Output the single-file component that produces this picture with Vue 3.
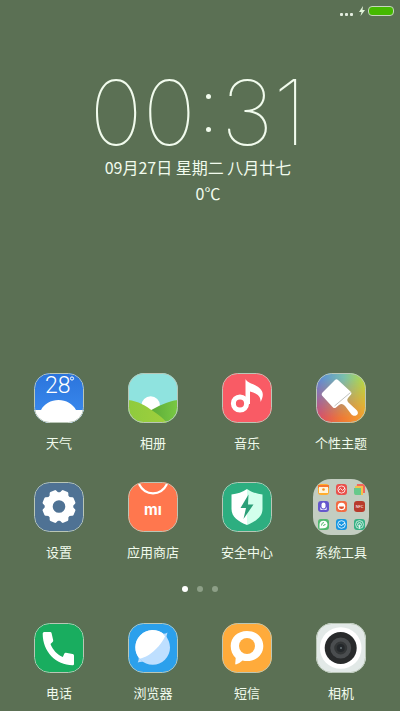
<script setup>
import { ref } from 'vue'

const apps = ref([
  { icon: 'weather', name: '天气' },
  { icon: 'gallery', name: '相册' },
  { icon: 'music', name: '音乐' },
  { icon: 'themes', name: '个性主题' },
  { icon: 'settings', name: '设置' },
  { icon: 'store', name: '应用商店' },
  { icon: 'security', name: '安全中心' },
  { icon: 'tools', name: '系统工具', folder: true },
])

const dock = ref([
  { icon: 'phone', name: '电话' },
  { icon: 'browser', name: '浏览器' },
  { icon: 'message', name: '短信' },
  { icon: 'camera', name: '相机' },
])

const currentPage = ref(0)
const teeth = [22.5, 67.5, 112.5, 157.5, 202.5, 247.5, 292.5, 337.5]
</script>

<template>
  <div class="home">
    <svg class="defs" aria-hidden="true">
      <defs>
        <linearGradient id="sky" x1="0" y1="0" x2="0" y2="1">
          <stop offset="0" stop-color="#2b74dc" />
          <stop offset="1" stop-color="#3c8df0" />
        </linearGradient>
        <linearGradient id="hill" x1="0" y1="0" x2="1" y2="0">
          <stop offset="0" stop-color="#8ecb3e" />
          <stop offset="1" stop-color="#a0cf3c" />
        </linearGradient>
        <linearGradient id="hill-back" x1="0" y1="0" x2="1" y2="0">
          <stop offset="0" stop-color="#58a838" />
          <stop offset="1" stop-color="#7ac943" />
        </linearGradient>
        <linearGradient id="rainbow-top" x1="0" y1="0" x2="1" y2="0">
          <stop offset="0" stop-color="#5a86dc" />
          <stop offset="0.55" stop-color="#79bfae" />
          <stop offset="1" stop-color="#b9dc3c" />
        </linearGradient>
        <linearGradient id="rainbow-bottom" x1="0" y1="0" x2="1" y2="0">
          <stop offset="0" stop-color="#d8486c" />
          <stop offset="0.5" stop-color="#ee7836" />
          <stop offset="1" stop-color="#f6a22c" />
        </linearGradient>
        <linearGradient id="fade" x1="0" y1="0" x2="0" y2="1">
          <stop offset="0.1" stop-color="#000" />
          <stop offset="0.9" stop-color="#fff" />
        </linearGradient>
        <mask id="fade-mask">
          <rect width="50" height="50" fill="url(#fade)" />
        </mask>

        <symbol id="weather" viewBox="0 0 50 50">
          <rect width="50" height="50" fill="url(#sky)" />
          <path d="M0 37h7c3-6 10-10 17.500-10S39 31 42 37h8v13H0z" fill="#fff" />
          <text class="degrees" x="11" y="20">28</text>
          <circle cx="38" cy="5.500" r="1.600" fill="none" stroke="#fff" />
        </symbol>

        <symbol id="gallery" viewBox="0 0 50 50">
          <rect width="50" height="50" fill="#8fe3df" />
          <circle cx="22.700" cy="32.500" r="9.300" fill="#fff" />
          <path d="M20 39C30 33 40 28 50 27v23H20z" fill="url(#hill-back)" />
          <path d="M0 27c10 1 18 6 25 11 6 4 11 8 14 12H0z" fill="url(#hill)" />
        </symbol>

        <symbol id="music" viewBox="0 0 50 50">
          <rect width="50" height="50" fill="#f95b65" />
          <circle cx="18" cy="30.500" r="6.600" fill="none" stroke="#fff" stroke-width="5" />
          <path d="M23.500 6c2 4 6 4 11 7 6 3.500 8.500 8 4 16 .5-6-4-9-10.500-10.500V31h-4.500z" fill="#fff" />
        </symbol>

        <symbol id="themes" viewBox="0 0 50 50">
          <rect width="50" height="50" fill="url(#rainbow-top)" />
          <rect width="50" height="50" fill="url(#rainbow-bottom)" mask="url(#fade-mask)" />
          <path d="M19 7q1.500-1.300 3 0l13 12q1 1.200 0 2.500l-3 3.500c-1.500 2-.5 4 1.500 5.500l7 6.500c4 4-1.500 8-5 4.500l-6-8c-2-2.500-4-3.500-6.500-1.500L20 34.500q-1.500 1-3 0l-11-12q-1-1.500.5-3z" fill="#fff" />
          <path d="M34.500 19.500 18.500 33" fill="none" stroke="#a5a7a4" stroke-width=".7" />
        </symbol>

        <symbol id="settings" viewBox="0 0 50 50">
          <rect width="50" height="50" fill="#4f7294" />
          <circle cx="25" cy="24.500" r="10.300" fill="none" stroke="#fff" stroke-width="8" />
          <path
            v-for="angle in teeth"
            :key="angle"
            d="M19.800 12.500 21.500 8.600q.4-.8 1.200-.8h4.600q.8 0 1.200.8l1.700 3.900z"
            :transform="`rotate(${angle} 25 24.500)`"
            fill="#fff"
          />
        </symbol>

        <symbol id="store" viewBox="0 0 50 50">
          <rect width="50" height="50" fill="#ff774e" />
          <path d="M11 2c3 6 8 9.300 14 9.300S36 8 39 2" fill="none" stroke="#fff" stroke-width="2.200" />
          <text class="brand" x="25" y="33" text-anchor="middle">mı</text>
        </symbol>

        <symbol id="security" viewBox="0 0 50 50">
          <rect width="50" height="50" fill="#2dae80" />
          <path d="M25 7c-4 3-10 5-15.500 5.500V27c0 8 7 12.500 15.500 16z" fill="#fff" />
          <path d="M25 7c4 3 10 5 15.500 5.500V27c0 8-7 12.500-15.500 16z" fill="#d2ffec" />
          <path d="M26.500 12.500 18.500 26H24l-2.500 11L31.500 22.500H26z" fill="#2b9f78" />
        </symbol>

        <symbol id="tools" viewBox="0 0 56 56">
          <rect width="56" height="56" fill="#c3cdc1" />
          <g transform="translate(5 5)">
            <rect width="11" height="11" rx="3" fill="#ffad2e" />
            <path d="M0 1h11v3H0z" fill="#f5762f" />
            <path d="M1 3h9v6H1z" fill="#fff4dc" />
            <circle cx="5.500" cy="5.500" r="1.300" fill="#f59322" />
          </g>
          <g transform="translate(23 5)">
            <rect width="11" height="11" rx="3" fill="#e9504b" />
            <circle cx="5.500" cy="5.500" r="3.600" fill="none" stroke="#fff" stroke-width=".8" />
            <path d="m2.500 6.500 2-2 2 2 2.500-2.500" fill="none" stroke="#fff" stroke-width=".8" />
          </g>
          <g transform="translate(41 5)">
            <path d="M3 0h6q2 0 2 2v7H2z" fill="#f2675c" />
            <path d="M1 2h8v9H1z" fill="#f3c24c" />
            <path d="M0 4h7v7H2q-2 0-2-2z" fill="#67c98b" />
          </g>
          <g transform="translate(5 22)">
            <rect width="11" height="11" rx="3" fill="#6557cc" />
            <rect x="3.500" y="1.500" width="4" height="6" rx="2" fill="#fff" />
            <path d="M2 6q3.500 5 7 0l-.5 3h-6z" fill="#e9e5ff" />
          </g>
          <g transform="translate(23 22)">
            <rect width="11" height="11" rx="3" fill="#f36b42" />
            <circle cx="5.500" cy="5.500" r="3.800" fill="#fff" />
            <path d="M3 5.500h5q0 2.500-2.500 2.500T3 5.500" fill="#e2512d" />
          </g>
          <g transform="translate(41 22)">
            <rect width="11" height="11" rx="3" fill="#b83a2b" />
            <text class="nfc" x="5.500" y="7" text-anchor="middle">NFC</text>
          </g>
          <g transform="translate(5 40)">
            <rect width="11" height="11" rx="3" fill="#4fb96e" />
            <path d="M1.500 9.500V5.500a4 3.800 0 1 1 4 3.800z" fill="#fff" />
            <path d="M3.500 6.500q0-3 2.500-3M5.500 7q0-1.500 2-1.500" fill="none" stroke="#4fb96e" />
          </g>
          <g transform="translate(23 40)">
            <rect width="11" height="11" rx="3" fill="#1696e2" />
            <circle cx="5.500" cy="5.500" r="3.800" fill="none" stroke="#fff" stroke-width=".8" />
            <path d="m3 5 2.500 1.500L9 4" fill="none" stroke="#fff" />
          </g>
          <g transform="translate(41 40)">
            <rect width="11" height="11" rx="3" fill="#35b184" />
            <circle cx="5.500" cy="5.500" r="3.900" fill="none" stroke="#fff" stroke-width=".7" />
            <circle cx="5.500" cy="5.500" r="1.900" fill="none" stroke="#fff" stroke-width=".8" />
            <path d="M5.500 5.500v4" stroke="#fff" stroke-width=".8" />
          </g>
        </symbol>

        <symbol id="phone" viewBox="0 0 50 50">
          <rect width="50" height="50" fill="#19ad5f" />
          <path d="M8.700 10.500Q8.700 9 10.200 9h6q1.200 0 1.400 1.200l1.600 7q.2 1-.6 1.700L16.500 21c2 5.500 6.500 10.500 12.300 13l1.500-3.300q.4-1.100 1.600-.9l6.700 1.100q1.400.2 1.400 1.600V41q0 1.300-1.400 1.200C22 42 8.700 29 8.700 10.500z" fill="#fff" />
        </symbol>

        <symbol id="browser" viewBox="0 0 50 50">
          <rect width="50" height="50" fill="#2ba0ec" />
          <circle cx="24.700" cy="24.500" r="17.300" fill="#bedfff" />
          <path d="M11.500 35.700A17.300 17.300 0 0 1 35.900 11.300l2.100-.3C34 22 22 34 11.500 35.700z" fill="#fff" />
          <path d="M39.500 9.500q-1.200 3-.9 6l-3.600-4.800q2.500.2 4.500-1.200zM9.700 39.500q3-1 5.500-.6l-4.500-4.400q.3 2.500-1 5z" fill="#bedfff" />
        </symbol>

        <symbol id="message" viewBox="0 0 50 50">
          <rect width="50" height="50" fill="#ffab3b" />
          <path d="M25 8c9.500 0 16.300 6.500 16.300 15S34.500 38 25 38c-1.500 0-3-.2-4.500-.6-2 1.800-4.300 3.200-6.600 4.100q-.8 0-.7-.8l.5-5.700C10.500 32 8.700 28 8.700 23 8.700 14.500 15.500 8 25 8z" fill="#fff" />
          <circle cx="25" cy="23" r="8" fill="#ffab3b" />
        </symbol>

        <symbol id="camera" viewBox="0 0 50 50">
          <rect width="50" height="50" fill="#e2e9e7" />
          <circle cx="24.700" cy="25" r="20.800" fill="#fff" />
          <circle cx="24.700" cy="25" r="16" fill="#282a2b" />
          <circle cx="24.700" cy="25" r="8.500" fill="#333637" stroke="#4a4d4f" stroke-width="4" />
          <circle cx="24.700" cy="25" r="4" fill="#24282b" />
          <circle cx="25" cy="25" r="1" fill="#68747a" />
        </symbol>
      </defs>
    </svg>

    <header class="status-bar">
      <div class="signal">
        <span v-for="n in 3" :key="n" />
      </div>
      <svg class="bolt" viewBox="0 0 6 10">
        <path d="M4 0 0 6h2.500L1.500 10 6 4H3.500z" />
      </svg>
      <div class="battery" />
    </header>

    <section class="clock">
      <div class="time">
        <span>00</span>
        <span class="colon"><i /><i /></span>
        <span>31</span>
      </div>
      <p class="date">09月27日 星期二 八月廿七</p>
      <p class="temperature">0℃</p>
    </section>

    <main class="app-grid">
      <button v-for="app in apps" :key="app.icon" class="app" type="button">
        <svg v-if="app.folder" class="icon folder" viewBox="0 0 56 56">
          <use :href="`#${app.icon}`" />
        </svg>
        <svg v-else class="icon" viewBox="0 0 50 50">
          <use :href="`#${app.icon}`" />
          <rect class="edge" x=".5" y=".5" width="49" height="49" rx="15" />
        </svg>
        <span class="label">{{ app.name }}</span>
      </button>
    </main>

    <nav class="pages">
      <button
        v-for="n in 3"
        :key="n"
        class="page"
        :class="{ active: currentPage === n - 1 }"
        type="button"
        :aria-label="`第${n}页`"
        @click="currentPage = n - 1"
      />
    </nav>

    <footer class="dock">
      <button v-for="app in dock" :key="app.icon" class="app" type="button">
        <svg class="icon" viewBox="0 0 50 50">
          <use :href="`#${app.icon}`" />
          <rect class="edge" x=".5" y=".5" width="49" height="49" rx="15" />
        </svg>
        <span class="label">{{ app.name }}</span>
      </button>
    </footer>
  </div>
</template>

<style>
body {
  margin: 0;
  background: #5b7054;
}
</style>

<style scoped>
.home {
  display: flex;
  flex-direction: column;
  min-height: 100vh;
  color: #f1fbed;
  font-family: "Noto Sans CJK SC", sans-serif;
}

.defs {
  position: absolute;
  width: 0;
  height: 0;
}

.status-bar {
  display: flex;
  justify-content: flex-end;
  align-items: center;
  height: 22px;
  padding-right: 6px;
}

.signal {
  display: flex;
  gap: 2px;
  margin-right: 6px;
  padding-top: 6px;
}

.signal span {
  width: 3px;
  height: 3px;
  border-radius: 1px;
  background: #e3ecdf;
}

.bolt {
  width: 6px;
  height: 10px;
  margin-right: 3px;
  fill: #e3f4dc;
}

.battery {
  box-sizing: border-box;
  width: 26px;
  height: 10px;
  border: 1px solid #c5d6bd;
  border-radius: 4px;
  background: #45b900;
}

.clock {
  display: flex;
  flex-direction: column;
  align-items: center;
  padding-top: 50px;
  padding-right: 4px;
}

.time {
  display: flex;
  height: 82px;
  font-family: Inter, sans-serif;
  font-size: 90px;
  font-weight: 100;
  line-height: 82px;
}

.colon {
  display: flex;
  flex-direction: column;
  justify-content: center;
  gap: 28px;
  padding: 0 10px;
}

.colon i {
  width: 5px;
  height: 5px;
  border-radius: 50%;
  background: #f1fbed;
}

.date,
.temperature {
  margin: 0;
  font-size: 16px;
  line-height: 26px;
}

.temperature {
  padding-left: 20px;
}

.app-grid,
.dock {
  display: grid;
  grid-template-columns: repeat(4, 1fr);
  padding: 0 12px;
}

.app-grid {
  row-gap: 29px;
  margin-top: auto;
}

.app {
  display: flex;
  flex-direction: column;
  align-items: center;
  gap: 10px;
  padding: 0;
  border: none;
  background: none;
  color: inherit;
  font-family: inherit;
  cursor: pointer;
}

.icon {
  width: 50px;
  height: 50px;
  border-radius: 16px;
}

.folder {
  width: 56px;
  height: 56px;
  margin: -3px;
  border-radius: 18px;
}

.edge {
  fill: none;
  stroke: #b9c6b6;
}

.label {
  font-size: 13px;
  line-height: 20px;
}

.degrees {
  fill: #fff;
  font-family: Roboto, sans-serif;
  font-size: 23px;
  font-weight: 300;
}

.brand {
  fill: #fff;
  font-family: Inter, sans-serif;
  font-size: 15px;
  font-weight: 700;
}

.nfc {
  fill: #fff;
  font-family: Roboto, sans-serif;
  font-size: 4px;
}

.pages {
  display: flex;
  justify-content: center;
  gap: 9px;
  padding: 24px 0 31px;
}

.page {
  width: 6px;
  height: 6px;
  padding: 0;
  border: none;
  border-radius: 50%;
  background: #8d9f87;
  cursor: pointer;
}

.page.active {
  background: #fff;
}

.dock {
  padding-bottom: 8px;
}
</style>
